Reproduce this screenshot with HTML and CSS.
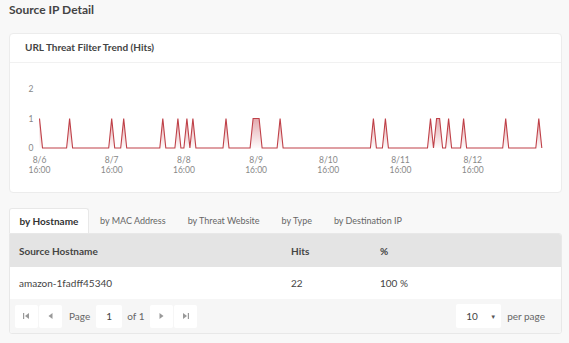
FILE: index.html
```html
<html lang="en">
<head>
	<meta charset="utf-8">
	<title>Source IP Detail</title>
	<link rel="stylesheet" href="styles.css">
</head>
<body>
	<div class="page">
		<h2 class="title">Source IP Detail</h2>

		<div class="card chart-card">
			<div class="card-head">URL Threat Filter Trend (Hits)</div>
			<div class="chart">
				<svg id="trend" width="553" height="130" viewBox="0 0 553 130">
					<defs>
						<linearGradient id="fillGrad" x1="0" y1="0" x2="0" y2="1">
							<stop offset="0" stop-color="#c0414a" stop-opacity="0.45"/>
							<stop offset="1" stop-color="#c0414a" stop-opacity="0.02"/>
						</linearGradient>
					</defs>
					<g class="axis-y">
						<text x="22" y="29">2</text>
						<text x="22" y="58.5">1</text>
						<text x="22" y="88">0</text>
					</g>
					<g id="axisX" class="axis-x"></g>
					<path id="area" fill="url(#fillGrad)"></path>
					<path id="line" fill="none" stroke="#bf4048" stroke-width="1.1"></path>
				</svg>
			</div>
		</div>

		<div class="tabs">
			<div class="tab active">by Hostname</div>
			<div class="tab">by MAC Address</div>
			<div class="tab">by Threat Website</div>
			<div class="tab">by Type</div>
			<div class="tab">by Destination IP</div>
		</div>

		<div class="card table-card">
			<div class="row head">
				<div class="col host">Source Hostname</div>
				<div class="col hits">Hits</div>
				<div class="col pct">%</div>
			</div>
			<div class="row">
				<div class="col host">amazon-1fadff45340</div>
				<div class="col hits">22</div>
				<div class="col pct">100 %</div>
			</div>
			<div class="pager">
				<div class="pager-left">
					<span class="pbtn">
						<svg width="7" height="6" viewBox="0 0 7 6"><rect x="0" y="0" width="1.2" height="6" fill="#999"/><path d="M6 0 L2 3 L6 6 Z" fill="#999"/></svg>
					</span>
					<span class="pbtn">
						<svg width="5" height="6" viewBox="0 0 5 6"><path d="M4.5 0 L0.5 3 L4.5 6 Z" fill="#999"/></svg>
					</span>
					<span class="plabel">Page</span>
					<span class="pinput">1</span>
					<span class="plabel of">of 1</span>
					<span class="pbtn">
						<svg width="5" height="6" viewBox="0 0 5 6"><path d="M0.5 0 L4.5 3 L0.5 6 Z" fill="#999"/></svg>
					</span>
					<span class="pbtn">
						<svg width="7" height="6" viewBox="0 0 7 6"><path d="M1 0 L5 3 L1 6 Z" fill="#999"/><rect x="5.8" y="0" width="1.2" height="6" fill="#999"/></svg>
					</span>
				</div>
				<div class="pager-right">
					<span class="select">10 <span class="caret">&#9660;</span></span>
					<span class="plabel per">per page</span>
				</div>
			</div>
		</div>
	</div>

	<script type="text/javascript">
		// hourly hits, starting 8/6 16:00
		let hitHours = [0, 10, 24, 28, 41, 46, 49, 51, 62, 71, 72, 73, 80, 111, 115, 130, 132, 133, 136, 141, 155, 166];
		let hours = 168;
		let x0 = 30.5;
		let step = 3.008;
		let yBase = 85;
		let yOne = 55.5;

		let values = new Array(hours).fill(0);
		hitHours.forEach(h => values[h] = 1);

		let pts = values.map((v, i) => [x0 + i * step, v ? yOne : yBase]);
		let line = pts.map((p, i) => (i ? "L" : "M") + p[0].toFixed(1) + " " + p[1]).join(" ");
		let last = pts[pts.length - 1];
		document.querySelector('#line').setAttribute('d', line);
		document.querySelector('#area').setAttribute('d', line + ` L${last[0].toFixed(1)} ${yBase} L${x0} ${yBase} Z`);

		let axisX = document.querySelector('#axisX');
		let days = ["8/6", "8/7", "8/8", "8/9", "8/10", "8/11", "8/12"];
		days.forEach((d, k) => {
			let x = (x0 + k * 24 * step).toFixed(1);
			axisX.innerHTML += `<text x="${x}" y="99.5">${d}</text><text x="${x}" y="109.5">16:00</text>`;
		});
	</script>
</body>
</html>
```

FILE: styles.css
```css
html, body {
	margin: 0;
	padding: 0;
	background: #f8f8f8;
	color: #555;
	font-family: Lato, "Noto Sans", sans-serif;
}

*, *:before, *:after {
	box-sizing: border-box;
}

.page {
	padding: 0 7px 0 9px;
}

.title {
	margin: 0 0 13px 0;
	height: 20px;
	line-height: 19px;
	font-size: 12px;
	font-weight: bold;
	color: #444;
}

.card {
	background: #fff;
	border: 1px solid #ececec;
	border-radius: 4px;
}

.chart-card {
	height: 160px;
}

.card-head {
	height: 29px;
	line-height: 27px;
	padding-left: 15px;
	font-size: 10px;
	font-weight: bold;
	color: #444;
	border-bottom: 1px solid #f1f1f1;
}

.chart svg {
	display: block;
	margin-left: -1px;
}

.chart text {
	font-family: Lato, "Noto Sans", sans-serif;
	font-size: 8.5px;
	fill: #888;
	text-anchor: middle;
}

.tabs {
	display: flex;
	margin-top: 15px;
	height: 25px;
}

.tab {
	flex-shrink: 0;
	white-space: nowrap;
	padding: 0 11px;
	line-height: 25px;
	font-size: 9px;
	color: #666;
}

.tab.active {
	width: 80px;
	padding: 0;
	text-align: center;
	background: #fff;
	border: 1px solid #e8e8e8;
	border-bottom: none;
	border-radius: 3px 3px 0 0;
	font-size: 10px;
	font-weight: bold;
	color: #333;
}

.table-card {
	border-radius: 0 3px 3px 3px;
	border-color: #e8e8e8;
	overflow: hidden;
}

.row {
	display: flex;
	height: 32px;
	align-items: center;
	font-size: 10px;
	color: #444;
}

.row.head {
	height: 33px;
	background: #e4e4e4;
	font-weight: bold;
	color: #444;
}

.col.host {
	width: 281px;
	padding-left: 9px;
}

.col.hits {
	width: 89px;
}

.pager {
	display: flex;
	justify-content: space-between;
	align-items: center;
	height: 34px;
	background: #f6f6f6;
	padding: 0 16px 0 5px;
	font-size: 10px;
	color: #666;
}

.pager-left, .pager-right {
	display: flex;
	align-items: center;
}

.pbtn {
	display: flex;
	align-items: center;
	justify-content: center;
	width: 23px;
	height: 23px;
	background: #fff;
	border-radius: 2px;
	margin-right: 1px;
}

.plabel {
	padding: 0 6px;
}

.plabel.of {
	padding: 0 6px 0 5px;
}

.plabel.per {
	padding: 0 0 0 6px;
}

.pinput {
	display: inline-block;
	width: 26px;
	height: 23px;
	line-height: 23px;
	text-align: center;
	background: #fff;
	border-radius: 2px;
	color: #444;
}

.select {
	display: inline-block;
	width: 45px;
	height: 24px;
	line-height: 24px;
	padding-left: 10px;
	background: #fff;
	border-radius: 2px;
	color: #444;
}

.caret {
	font-size: 6px;
	margin-left: 10px;
	vertical-align: 1px;
	color: #555;
}
```
